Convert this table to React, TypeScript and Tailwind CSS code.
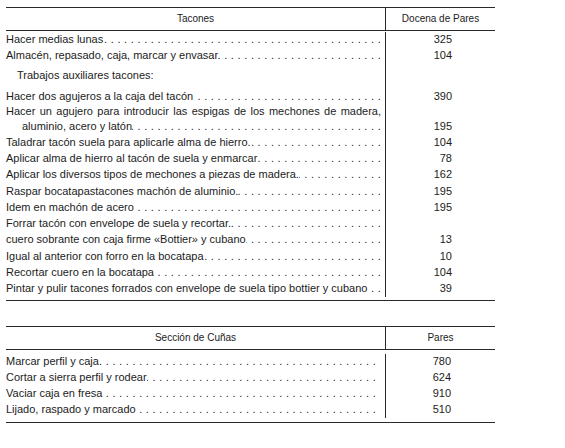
import React from "react";

const DOTS = ". ".repeat(90) + ".";

function Leader() {
  return (
    <div className="flex min-w-0 flex-1 justify-end overflow-hidden">
      <span className="shrink-0 whitespace-nowrap tracking-[0.28px]">{DOTS}</span>
    </div>
  );
}

type RowProps = {
  text: string;
  value?: string;
  h: string;
  dots?: boolean;
  indent?: string;
  leaderPad?: string;
  valuePad?: string;
};

function Row({ text, value, h, dots = true, indent = "", leaderPad = "pr-[4px]", valuePad = "pr-[43px]" }: RowProps) {
  return (
    <div className={`flex ${h}`}>
      <div className={`flex w-[380px] items-center border-r border-[#2a2a2a] ${leaderPad} ${indent}`}>
        <span className="shrink-0 whitespace-nowrap">{text}</span>
        {dots && <Leader />}
      </div>
      <div className={`flex w-[109px] items-center justify-end ${valuePad}`}>{value}</div>
    </div>
  );
}

export default function App() {
  return (
    <div
      className="min-h-[448px] w-[565px] bg-white pl-[6px] pt-[7px] text-[11px] leading-none text-[#1c1c1c]"
      style={{ fontFamily: '"Liberation Sans", Arial, sans-serif' }}
    >
      {/* Tabla Tacones */}
      <div className="w-[489px] border-y border-[#2a2a2a]">
        <div className="flex h-[23px] border-b border-[#2a2a2a] text-[10px]">
          <div className="flex w-[380px] items-center justify-center border-r border-[#2a2a2a]">Tacones</div>
          <div className="flex w-[109px] items-center justify-center">Docena de Pares</div>
        </div>

        <div className="flex h-[16px] pt-[1px]">
          <div className="flex w-[380px] items-center border-r border-[#2a2a2a] pr-[4px]">
            <span className="shrink-0 whitespace-nowrap">Hacer medias lunas</span>
            <Leader />
          </div>
          <div className="flex w-[109px] items-center justify-end pr-[43px]">325</div>
        </div>
        <Row h="h-[16px]" text="Almacén, repasado, caja, marcar y envasar" value="104" />
        <Row h="h-[25px]" text="Trabajos auxiliares tacones:" dots={false} indent="pl-[11px]" />
        <Row h="h-[16px]" text="Hacer dos agujeros a la caja del tacón" value="390" />

        <div className="flex h-[30px]">
          <div className="flex w-[380px] flex-col border-r border-[#2a2a2a] pr-[4px]">
            <div className="flex h-[15px] items-center">
              <div className="w-full text-justify [text-align-last:justify]">
                Hacer un agujero para introducir las espigas de los mechones de madera,
              </div>
            </div>
            <div className="flex h-[15px] items-center pl-[16px]">
              <span className="shrink-0 whitespace-nowrap">aluminio, acero y latón</span>
              <Leader />
            </div>
          </div>
          <div className="flex w-[109px] flex-col justify-end pr-[43px]">
            <div className="flex h-[15px] items-center justify-end">195</div>
          </div>
        </div>

        <Row h="h-[16.3px]" text="Taladrar tacón suela para aplicarle alma de hierro." value="104" />
        <Row h="h-[16.3px]" text="Aplicar alma de hierro al tacón de suela y enmarcar" value="78" />
        <Row h="h-[16.3px]" text="Aplicar los diversos tipos de mechones a piezas de madera." value="162" />
        <Row h="h-[16.3px]" text="Raspar bocatapastacones machón de aluminio." value="195" />
        <Row h="h-[16.3px]" text="Idem en machón de acero" value="195" />
        <Row h="h-[16.3px]" text="Forrar tacón con envelope de suela y recortar." />
        <Row h="h-[16.3px]" text="cuero sobrante con caja firme «Bottier» y cubano" value="13" />
        <Row h="h-[16.3px]" text="Igual al anterior con forro en la bocatapa" value="10" />
        <Row h="h-[16.3px]" text="Recortar cuero en la bocatapa" value="104" />
        <div className="flex h-[19.3px] pb-[3px]">
          <div className="flex w-[380px] items-center border-r border-[#2a2a2a] pr-[4px]">
            <span className="shrink-0 whitespace-nowrap">
              Pintar y pulir tacones forrados con envelope de suela tipo bottier y cubano
            </span>
            <Leader />
          </div>
          <div className="flex w-[109px] items-center justify-end pr-[43px]">39</div>
        </div>
      </div>

      {/* Tabla Cuñas */}
      <div className="mt-[25px] w-[489px] border-y border-[#2a2a2a]">
        <div className="flex h-[23px] border-b border-[#2a2a2a] text-[10px]">
          <div className="flex w-[380px] items-center justify-center border-r border-[#2a2a2a]">Sección de Cuñas</div>
          <div className="flex w-[109px] items-center justify-center">Pares</div>
        </div>
        <div className="flex h-[20px] pt-[4px]">
          <div className="flex w-[380px] items-center border-r border-[#2a2a2a] pr-[9px]">
            <span className="shrink-0 whitespace-nowrap">Marcar perfil y caja</span>
            <Leader />
          </div>
          <div className="flex w-[109px] items-center justify-end pr-[44px]">780</div>
        </div>
        <Row h="h-[16px]" text="Cortar a sierra perfil y rodear" value="624" leaderPad="pr-[9px]" valuePad="pr-[44px]" />
        <Row h="h-[16px]" text="Vaciar caja en fresa" value="910" leaderPad="pr-[9px]" valuePad="pr-[44px]" />
        <div className="flex h-[20px] pb-[4px]">
          <div className="flex w-[380px] items-center border-r border-[#2a2a2a] pr-[9px]">
            <span className="shrink-0 whitespace-nowrap">Lijado, raspado y marcado</span>
            <Leader />
          </div>
          <div className="flex w-[109px] items-center justify-end pr-[44px]">510</div>
        </div>
      </div>
    </div>
  );
}
